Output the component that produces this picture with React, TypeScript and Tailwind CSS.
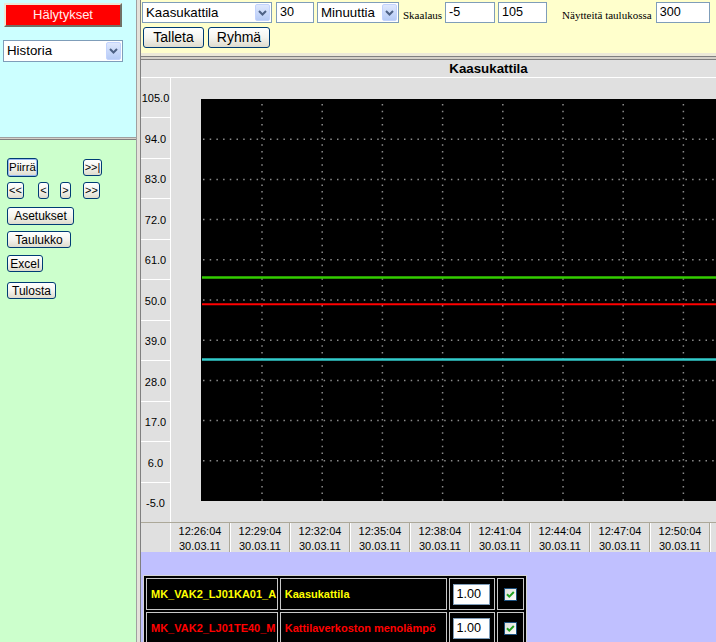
import React from 'react';

const xpBtn =
  'rounded-[3px] border border-[#003c74] bg-gradient-to-b from-white via-[#f5f4ef] to-[#dedbcd] text-black leading-none flex items-center justify-center shrink-0';

function DropArrow() {
  return (
    <div className="w-[15px] m-px rounded-[2px] border border-[#c3d3fd] bg-gradient-to-b from-[#dfe8fd] to-[#b6cbf6] flex items-center justify-center shrink-0">
      <svg width="9" height="6" viewBox="0 0 9 6">
        <path d="M1 1 L4.5 4.5 L8 1" fill="none" stroke="#4d6185" strokeWidth="2" />
      </svg>
    </div>
  );
}

function FakeSelect({ value, className }: { value: string; className: string }) {
  return (
    <div className={`border border-[#7f9db9] bg-white flex items-stretch shrink-0 ${className}`}>
      <span className="flex-1 pl-[3px] flex items-center text-[13.3px] text-black">{value}</span>
      <DropArrow />
    </div>
  );
}

function FakeInput({ value, className }: { value: string; className: string }) {
  return (
    <div
      className={`h-[21px] border border-[#7f9db9] bg-white pl-[3px] flex items-center text-[12.6px] text-black shrink-0 ${className}`}
    >
      {value}
    </div>
  );
}

const yLabels = ['105.0', '94.0', '83.0', '72.0', '61.0', '50.0', '39.0', '28.0', '17.0', '6.0', '-5.0'];
// only the first nine columns fit in the window; the rest are drawn empty
const times = [
  '12:26:04', '12:29:04', '12:32:04', '12:35:04', '12:38:04', '12:41:04',
  '12:44:04', '12:47:04', '12:50:04', '', '',
];

function Plot() {
  const w = 600;
  const h = 402;
  const vx = Array.from({ length: 10 }, (_, i) => 61 + i * 60.2);
  const hy = Array.from({ length: 9 }, (_, i) => 40.2 * (i + 1));
  return (
    <svg width={w} height={h} className="block bg-black">
      {hy.map((y) => (
        <line key={'h' + y} x1={2} x2={w} y1={y} y2={y} stroke="#8c8c8c" strokeWidth="1.5" strokeDasharray="1.5 5.2" />
      ))}
      {vx.map((x) => (
        <line key={'v' + x} x1={x} x2={x} y1={5} y2={h} stroke="#8c8c8c" strokeWidth="1.5" strokeDasharray="1.5 5.2" />
      ))}
      <line x1={1} x2={w} y1={178.5} y2={178.5} stroke="#33cc00" strokeWidth="2.6" />
      <line x1={1} x2={w} y1={205.3} y2={205.3} stroke="#ff0000" strokeWidth="2" />
      <line x1={1} x2={w} y1={260.5} y2={260.5} stroke="#33cccc" strokeWidth="2.4" />
    </svg>
  );
}

function CheckBox() {
  return (
    <svg width="13" height="13" viewBox="0 0 13 13">
      <defs>
        <linearGradient id="cb" x1="0" y1="0" x2="1" y2="1">
          <stop offset="0" stopColor="#dcdcd7" />
          <stop offset="1" stopColor="#ffffff" />
        </linearGradient>
      </defs>
      <rect x="0.5" y="0.5" width="12" height="12" fill="url(#cb)" stroke="#1c5180" />
      <path d="M3 6.2 L5.3 8.6 L9.8 4" fill="none" stroke="#21a121" strokeWidth="2" />
    </svg>
  );
}

const rows = [
  { tag: 'MK_VAK2_LJ01KA01_A', name: 'Kaasukattila', color: 'text-[#ffff00]' },
  { tag: 'MK_VAK2_LJ01TE40_M', name: 'Kattilaverkoston menolämpö', color: 'text-[#ff0000]' },
];

export default function App() {
  return (
    <div className="w-[716px] h-[642px] overflow-hidden flex font-['Liberation_Sans',Arial,sans-serif] text-black">
      {/* Left frame */}
      <div className="w-[136px] shrink-0 flex flex-col">
        <div className="h-[137px] bg-[#ccffff] flex flex-col">
          <div className="mt-[3px] ml-[4px] w-[118px] h-[24px] bg-[#ff0000] border-t-2 border-l-2 border-t-[#ece9d8] border-l-[#ece9d8] border-r-2 border-b-2 border-r-[#716f64] border-b-[#716f64] flex items-center justify-center text-[13px] text-[#ffecec]">
            Hälytykset
          </div>
          <FakeSelect value="Historia" className="mt-[13px] ml-[3px] w-[120px] h-[22px]" />
        </div>
        <div className="h-[3px] bg-[#d4d0c8] border-t border-t-[#a0a0a0] border-b border-b-[#808080]" />
        <div className="flex-1 bg-[#ccffcc] pt-[18px] pl-[7px] flex flex-col items-start text-[11px]">
          <div className="flex items-start">
            <button className={`${xpBtn} w-[31px] h-[19px] text-[11.5px] shadow-[inset_0_0_0_1px_#98b8f0]`}>Piirrä</button>
            <button className={`${xpBtn} ml-[45px] mt-px w-[19px] h-[17px]`}>&gt;&gt;|</button>
          </div>
          <div className="flex mt-[5px]">
            <button className={`${xpBtn} w-[17px] h-[17px]`}>&lt;&lt;</button>
            <button className={`${xpBtn} ml-[14px] w-[11px] h-[17px]`}>&lt;</button>
            <button className={`${xpBtn} ml-[11px] w-[11px] h-[17px]`}>&gt;</button>
            <button className={`${xpBtn} ml-[12px] w-[17px] h-[17px]`}>&gt;&gt;</button>
          </div>
          <button className={`${xpBtn} mt-[8px] w-[67px] h-[18px] text-[12px]`}>Asetukset</button>
          <button className={`${xpBtn} mt-[6px] w-[64px] h-[17px] text-[12px]`}>Taulukko</button>
          <button className={`${xpBtn} mt-[7px] w-[36px] h-[17px] text-[12px]`}>Excel</button>
          <button className={`${xpBtn} mt-[10px] w-[49px] h-[17px] text-[12px]`}>Tulosta</button>
        </div>
      </div>

      {/* Frame separator */}
      <div className="w-[5px] shrink-0 bg-[#e4e2da] border-l border-l-[#a0a0a0] border-r border-r-[#808080]" />

      {/* Right frame */}
      <div className="flex-1 min-w-0 overflow-hidden flex flex-col">
        <div className="h-[53px] shrink-0 bg-[#ffffcc] pt-[2px] pl-[1px]">
          <div className="flex items-center">
            <FakeSelect value="Kaasukattila" className="w-[130px] h-[21px]" />
            <FakeInput value="30" className="ml-[4px] w-[38px]" />
            <FakeSelect value="Minuuttia" className="ml-[3px] w-[82px] h-[21px]" />
            <span className="ml-[4px] mt-[5px] font-['Liberation_Serif',serif] text-[11px] whitespace-nowrap">Skaalaus</span>
            <FakeInput value="-5" className="ml-[3px] w-[50px]" />
            <FakeInput value="105" className="ml-[3px] w-[49px]" />
            <span className="ml-[15px] mt-[5px] font-['Liberation_Serif',serif] text-[11px] whitespace-nowrap">
              Näytteitä taulukossa
            </span>
            <FakeInput value="300" className="ml-[4px] w-[54px]" />
          </div>
          <div className="flex mt-[3px] ml-[1px] text-[14px]">
            <button className={`${xpBtn} w-[61px] h-[21px]`}>Talleta</button>
            <button className={`${xpBtn} ml-[4px] w-[62px] h-[21px]`}>Ryhmä</button>
          </div>
        </div>
        <div className="h-[3px] shrink-0 bg-[#ece9d8]" />
        <div className="h-px shrink-0 bg-[#808080]" />
        <div className="h-[2px] shrink-0 bg-[#d4d0c8]" />

        {/* Chart */}
        <div className="w-[695px] shrink-0 bg-[#e0e0e0] border-t border-t-[#808080]">
          <div className="h-[18px] border-b border-b-white flex items-center justify-center text-[13.3px] font-bold">
            Kaasukattila
          </div>
          <div className="h-[444px] flex">
            <div className="w-[30px] shrink-0 border-r border-r-white flex flex-col">
              {yLabels.map((l, i) => (
                <div
                  key={l}
                  className={`flex-1 flex items-center justify-center pt-[2px] text-[11px] ${i < yLabels.length - 1 ? 'border-b border-b-white' : ''}`}
                >
                  {l}
                </div>
              ))}
            </div>
            <div className="flex-1 pt-[21px] pl-[30px]">
              <Plot />
            </div>
          </div>
          <div className="h-[30px] flex border-t border-t-[#aca899] text-[11px] leading-[15px]">
            <div className="w-[29px] shrink-0" />
            {times.map((t, i) => (
              <div
                key={i}
                className="w-[60px] shrink-0 border-l border-l-white border-r border-r-[#aca899] flex flex-col items-center pt-px"
              >
                {t && (
                  <>
                    <span>{t}</span>
                    <span>30.03.11</span>
                  </>
                )}
              </div>
            ))}
          </div>
        </div>

        {/* Lower lavender */}
        <div className="flex-1 bg-[#c0c0ff] pt-[23px] pl-[2px]">
          <table className="table-fixed w-[384px] border-separate border-spacing-[2px] bg-black border border-[#d4d4d4] text-[11px] font-bold">
            <colgroup>
              <col className="w-[131px]" />
              <col className="w-[166px]" />
              <col className="w-[46px]" />
              <col className="w-[27px]" />
            </colgroup>
            <tbody>
              {rows.map((r) => (
                <tr key={r.tag} className="h-[32px]">
                  <td className={`border border-[#c8c8c8] pl-[4px] whitespace-nowrap overflow-hidden ${r.color}`}>{r.tag}</td>
                  <td className={`border border-[#c8c8c8] pl-[4px] whitespace-nowrap overflow-hidden ${r.color}`}>{r.name}</td>
                  <td className="border border-[#c8c8c8] pl-[3px]">
                    <div className="h-[21px] w-[37px] border border-[#7f9db9] bg-white pl-[3px] flex items-center font-normal text-[12.6px] text-black">
                      1.00
                    </div>
                  </td>
                  <td className="border border-[#c8c8c8]">
                    <div className="flex justify-center">
                      <CheckBox />
                    </div>
                  </td>
                </tr>
              ))}
            </tbody>
          </table>
        </div>
      </div>
    </div>
  );
}
